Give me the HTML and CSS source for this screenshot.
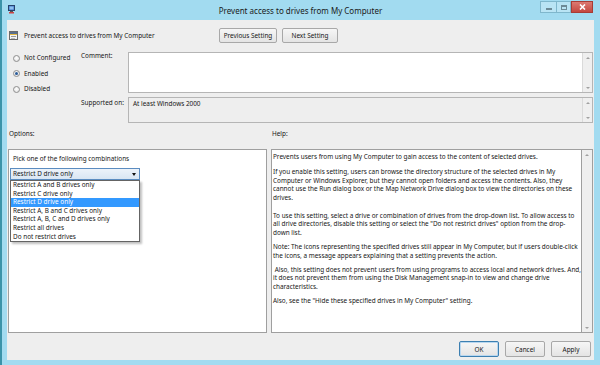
FILE: index.html
```html
<!DOCTYPE html>
<html>
<head>
<meta charset="utf-8">
<title>Prevent access to drives from My Computer</title>
<link rel="stylesheet" href="styles.css">
</head>
<body>
<div class="window">
  <div class="titlebar">
    <div class="tb-icon">
      <svg width="7" height="9" viewBox="0 0 7 9"><rect x="0.5" y="0.5" width="6" height="5" fill="#3f78c8" stroke="#25426e"/><rect x="1.5" y="1.5" width="4" height="3" fill="#8fc0f0"/><rect x="2" y="6" width="3" height="1" fill="#555"/><rect x="1" y="7" width="5" height="1.5" fill="#c44"/></svg>
    </div>
    <div class="title">Prevent access to drives from My Computer</div>
    <div class="controls">
      <span class="ctl ctl-min"><i></i></span>
      <span class="ctl ctl-max"><i></i></span>
      <span class="ctl ctl-close"><svg width="7" height="6" viewBox="0 0 7 6"><path d="M1 0.5 L6 5.5 M6 0.5 L1 5.5" stroke="#fff" stroke-width="1.6"/></svg></span>
    </div>
  </div>
  <div class="client">
    <div class="header">
      <div class="hdr-left">
        <svg class="set-icon" width="9" height="9" viewBox="0 0 9 9"><rect x="0.5" y="0.5" width="8" height="8" fill="#f4f4f4" stroke="#6a6a6a"/><rect x="1" y="1" width="7" height="2" fill="#5a6f8c"/><rect x="1" y="3" width="7" height="1" fill="#e8b840"/><rect x="2" y="5" width="5" height="1" fill="#9a9a9a"/><rect x="2" y="7" width="4" height="0.8" fill="#b0b0b0"/></svg>
        <span class="hdr-text">Prevent access to drives from My Computer</span>
      </div>
      <div class="nav">
        <button class="btn btn-prev">Previous Setting</button>
        <button class="btn btn-next">Next Setting</button>
      </div>
    </div>

    <div class="top">
      <div class="radios">
        <div class="radio"><span class="dot"></span>Not Configured</div>
        <div class="radio"><span class="dot on"></span>Enabled</div>
        <div class="radio"><span class="dot"></span>Disabled</div>
      </div>
      <div class="lbl lbl-comment">Comment:</div>
      <div class="box box-comment">
        <div class="box-body"></div>
        <div class="sb"><span class="arr up"></span><span class="arr down"></span></div>
      </div>
      <div class="lbl lbl-supported">Supported on:</div>
      <div class="box box-supported">
        <div class="box-body">At least Windows 2000</div>
        <div class="sb"><span class="arr up"></span><span class="arr down"></span></div>
      </div>
    </div>

    <div class="sec-labels">
      <span class="sec-options">Options:</span>
      <span class="sec-help">Help:</span>
    </div>

    <div class="panels">
      <div class="options">
        <div class="pick">Pick one of the following combinations</div>
        <div class="combo">
          <span class="combo-text">Restrict D drive only</span>
          <span class="combo-arrow"></span>
          <ul class="droplist">
            <li>Restrict A and B drives only</li>
            <li>Restrict C drive only</li>
            <li class="sel">Restrict D drive only</li>
            <li>Restrict A, B and C drives only</li>
            <li>Restrict A, B, C and D drives only</li>
            <li>Restrict all drives</li>
            <li>Do not restrict drives</li>
          </ul>
        </div>
      </div>
      <div class="help">
        <div class="help-body">
          <p class="p1">Prevents users from using My Computer to gain access to the content of selected drives.</p>
          <p class="p2">If you enable this setting, users can browse the directory structure of the selected drives in My<br>Computer or Windows Explorer, but they cannot open folders and access the contents. Also, they<br>cannot use the Run dialog box or the Map Network Drive dialog box to view the directories on these<br>drives.</p>
          <p>To use this setting, select a drive or combination of drives from the drop-down list. To allow access to<br>all drive directories, disable this setting or select the "Do not restrict drives" option from the drop-<br>down list.</p>
          <p>Note: The icons representing the specified drives still appear in My Computer, but if users double-click<br>the icons, a message appears explaining that a setting prevents the action.</p>
          <p>&nbsp;Also, this setting does not prevent users from using programs to access local and network drives. And,<br>it does not prevent them from using the Disk Management snap-in to view and change drive<br>characteristics.</p>
          <p>Also, see the "Hide these specified drives in My Computer" setting.</p>
        </div>
        <div class="sb sb-help"><span class="arr up"></span><span class="arr down"></span></div>
      </div>
    </div>

    <div class="footer">
      <button class="btn btn-ok">OK</button>
      <button class="btn">Cancel</button>
      <button class="btn">Apply</button>
    </div>
  </div>
</div>
</body>
</html>
```

FILE: styles.css
```css
* { box-sizing: border-box; margin: 0; padding: 0; }

body {
  width: 600px;
  height: 365px;
  overflow: hidden;
  font-family: "Noto Sans", "Open Sans", sans-serif;
  font-size: 6.4px;
  line-height: 8px;
  color: #161616;
  background: #9fd9ef;
}

.window {
  width: 600px;
  height: 365px;
  display: flex;
  flex-direction: column;
  background: #a2dbf0;
  border-left: 2px solid #3b93a9;
  padding: 0 6px 5px 5px;
}

/* title bar */
.titlebar {
  height: 20px;
  flex: none;
  display: grid;
  grid-template-columns: 1fr auto 1fr;
  align-items: start;
}
.tb-icon { padding-top: 5px; padding-left: 1px; line-height: 0; }
.title {
  font-size: 8px;
  line-height: 10px;
  padding-top: 6px;
  color: #1a1a1a;
  white-space: nowrap;
}
.controls {
  justify-self: end;
  display: flex;
  margin-top: 1px;
  margin-right: 1px;
}
.ctl {
  height: 12px;
  display: flex;
  align-items: center;
  justify-content: center;
  border: 1px solid #7fb7cc;
  background: rgba(255,255,255,0.25);
}
.ctl-min { width: 16px; border-right: none; }
.ctl-max { width: 15px; }
.ctl-min i { width: 6px; height: 2px; background: #6d8a96; margin-top: 4px; }
.ctl-max i { width: 6px; height: 5px; border: 1px solid #6d8a96; border-top-width: 2px; }
.ctl-close {
  width: 22px;
  background: linear-gradient(#dc7a72, #c4473f);
  border-color: #a83c35;
}

/* client */
.client {
  flex: 1;
  display: flex;
  flex-direction: column;
  background: #eeeeee;
  padding: 0 1px 3px 1px;
}

.header {
  display: flex;
  align-items: center;
  margin-top: 8px;
  height: 15px;
}
.hdr-left {
  width: 211px;
  flex: none;
  display: flex;
  align-items: center;
  padding-left: 1px;
}
.set-icon { margin-right: 6px; }
.hdr-text { white-space: nowrap; }
.nav { display: flex; gap: 5px; }

.btn {
  font-family: inherit;
  font-size: 6.4px;
  color: #161616;
  height: 15px;
  border: 1px solid #a8a8a8;
  border-radius: 2px;
  background: linear-gradient(#f6f6f6, #e4e4e4);
  display: flex;
  align-items: center;
  justify-content: center;
}
.btn-prev { width: 58px; }
.btn-next { width: 56px; }

/* top grid */
.top {
  display: grid;
  grid-template-columns: 73px 47px 1fr;
  grid-template-rows: 41px 26px;
  row-gap: 4px;
  margin-top: 9px;
}
.radios {
  grid-row: 1 / span 2;
  display: flex;
  flex-direction: column;
  gap: 5.5px;
  padding-top: 1px;
  padding-left: 5px;
}
.radio {
  height: 10px;
  display: flex;
  align-items: center;
  gap: 4px;
  white-space: nowrap;
}
.dot {
  width: 7px;
  height: 7px;
  border-radius: 50%;
  border: 1px solid #8f8f8f;
  background: radial-gradient(circle at 50% 40%, #ffffff, #dcdcdc);
  position: relative;
}
.dot.on::after {
  content: "";
  position: absolute;
  left: 1px;
  top: 1px;
  width: 3px;
  height: 3px;
  border-radius: 50%;
  background: #2a5c9a;
}
.lbl { white-space: nowrap; }
.lbl-supported { padding-top: 2px; }

.box {
  display: flex;
  border: 1px solid #b5b5b5;
}
.box-body { flex: 1; }
.box-comment .box-body { background: #ffffff; }
.box-supported .box-body { padding: 2px 0 0 4px; }
.sb {
  width: 10px;
  flex: none;
  display: flex;
  flex-direction: column;
  justify-content: space-between;
  align-items: center;
  padding: 4px 0 3px;
  border-left: 1px solid #dadada;
  background: #efefef;
}
.arr {
  width: 0;
  height: 0;
  border-left: 2px solid transparent;
  border-right: 2px solid transparent;
}
.arr.up { border-bottom: 2px solid #a0a0a0; }
.arr.down { border-top: 2px solid #a0a0a0; }

/* section labels */
.sec-labels {
  display: flex;
  margin-top: 7px;
  height: 8px;
}
.sec-options { width: 264px; flex: none; padding-left: 1px; }

/* panels */
.panels {
  display: flex;
  gap: 4px;
  margin-top: 11px;
  height: 184px;
}
.options {
  width: 259px;
  flex: none;
  background: #ffffff;
  border: 1px solid #9f9f9f;
  padding: 5px 1px 0 1px;
}
.pick { padding-left: 3px; }
.combo {
  position: relative;
  margin-top: 5px;
  width: 130px;
  height: 12px;
  border: 1px solid #5b8cc0;
  background: linear-gradient(#edf3fa, #d9e6f3);
  display: flex;
  align-items: center;
  padding-left: 2px;
}
.combo-text { flex: 1; white-space: nowrap; }
.combo-arrow {
  width: 0;
  height: 0;
  margin-right: 3px;
  border-left: 2px solid transparent;
  border-right: 2px solid transparent;
  border-top: 3px solid #111;
}
.droplist {
  position: absolute;
  left: -1px;
  top: 11px;
  width: 130px;
  list-style: none;
  background: #ffffff;
  border: 1px solid #646464;
  box-shadow: 2px 2px 2px rgba(0,0,0,0.25);
  padding: 0;
}
.droplist li {
  height: 8.6px;
  line-height: 8.6px;
  padding-left: 2px;
  white-space: nowrap;
}
.droplist li.sel { background: #3399ff; color: #ffffff; }

.help {
  flex: 1;
  min-width: 0;
  display: flex;
  border: 1px solid #9f9f9f;
  background: #efefef;
}
.help-body {
  flex: 1;
  min-width: 0;
  overflow: hidden;
  background: #ffffff;
  border-right: 1px solid #9f9f9f;
  padding: 3px 0 0 1px;
  line-height: 8.5px;
  white-space: nowrap;
}
.help-body p { margin-bottom: 5.8px; }
.help-body p.p1 { margin-bottom: 6.5px; }
.help-body p.p2 { margin-bottom: 9.8px; }
.sb-help { border-left: none; }

/* footer */
.footer {
  display: flex;
  justify-content: flex-end;
  gap: 6px;
  margin-top: 8px;
  padding-right: 2px;
}
.footer .btn { width: 40px; height: 16px; }
.btn-ok { border-color: #3c7fb1; box-shadow: inset 0 0 0 1px #b9d7ef; }
```
